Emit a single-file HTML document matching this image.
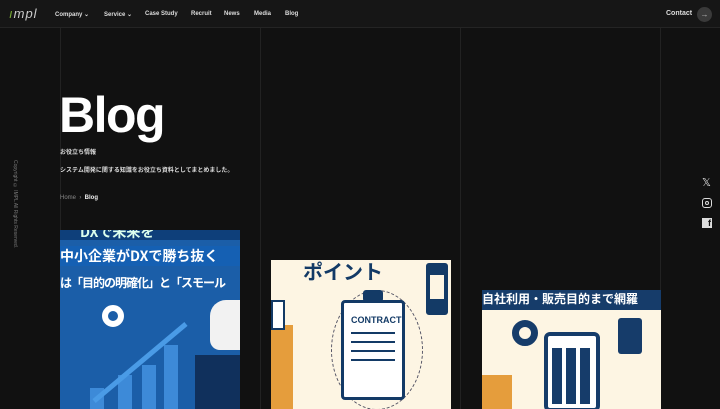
<!DOCTYPE html>
<html><head><meta charset="utf-8"><style>
*{margin:0;padding:0;box-sizing:border-box}
body{width:720px;height:409px;overflow:hidden;background:#111;font-family:"Liberation Sans","Noto Sans CJK JP",sans-serif;color:#fff;position:relative}
.vl{position:absolute;top:0;bottom:0;width:1px;background:#222}
.hdr{position:absolute;left:0;top:0;width:720px;height:28px;background:#161616;border-bottom:1px solid #242424}
.nav{position:absolute;top:11px;font-size:6px;font-weight:bold;color:#ddd}
.abs{position:absolute}
.card{position:absolute;overflow:hidden}
.jp{font-family:"Noto Sans CJK JP",sans-serif;font-weight:bold}
</style></head><body>
<div class="vl" style="left:60px"></div><div class="vl" style="left:260px"></div><div class="vl" style="left:460px"></div><div class="vl" style="left:660px"></div>
<div class="hdr"></div>
<div class="abs" style="left:9px;top:6px;font-size:13px;font-style:italic;color:#ccc;letter-spacing:1px"><span style="color:#7a3">ı</span>mpl</div>
<div class="nav" style="left:55px">Company ⌄</div>
<div class="nav" style="left:104px">Service ⌄</div>
<div class="nav" style="left:145px">Case Study</div>
<div class="nav" style="left:191px">Recruit</div>
<div class="nav" style="left:224px">News</div>
<div class="nav" style="left:254px">Media</div>
<div class="nav" style="left:285px">Blog</div>
<div class="nav" style="left:666px;font-size:7px;top:10px">Contact</div>
<div class="abs" style="left:697px;top:7px;width:15px;height:15px;border-radius:50%;background:#3a3a3a;color:#bbb;font-size:8px;text-align:center;line-height:15px">→</div>
<div class="abs" style="left:59px;top:86px;font-size:50px;font-weight:bold;letter-spacing:-1.5px">Blog</div>
<div class="abs jp" style="left:60px;top:147px;font-size:6px;color:#ddd">お役立ち情報</div>
<div class="abs jp" style="left:60px;top:165px;font-size:6px;color:#ddd">システム開発に関する知識をお役立ち資料としてまとめました。</div>
<div class="abs" style="left:60px;top:195px;font-size:6px;color:#888">Home &nbsp;›&nbsp; <span style="color:#eee;font-weight:bold">Blog</span></div>
<div class="abs" style="left:12px;top:160px;font-size:5px;color:#777;writing-mode:vertical-rl;white-space:nowrap">Copyright © IMPL All Rights Reserved.</div>
<div class="abs" style="left:702px;top:176px;font-size:11px;color:#ddd">𝕏</div>
<div class="abs" style="left:702px;top:198px;width:10px;height:10px;border:1.5px solid #ddd;border-radius:3px"><div style="width:4px;height:4px;border:1px solid #ddd;border-radius:50%;margin:1.5px"></div></div>
<div class="abs" style="left:702px;top:218px;width:10px;height:10px;background:#ddd;color:#111;font-size:9px;font-weight:bold;text-align:right;line-height:11px;padding-right:1px">f</div>

<div class="card" style="left:60px;top:230px;width:180px;height:179px;background:#1b5ea8">
 <div class="abs" style="left:0;top:0;width:180px;height:10px;background:#0e3f7a"></div>
 <div class="abs jp" style="left:20px;top:-8px;font-size:14px;color:#dfe">DXで未来を</div>
 <div class="abs" style="left:0;top:16px;width:180px;height:20px;background:#1560b3"></div>
 <div class="abs jp" style="left:0;top:16px;font-size:14px;white-space:nowrap">中小企業がDXで勝ち抜く</div>
 <div class="abs jp" style="left:0;top:44px;font-size:12px;white-space:nowrap;letter-spacing:-1px">は「目的の明確化」と「スモール</div>
 <div class="abs" style="left:42px;top:75px;width:22px;height:22px;border:6px solid #fff;border-radius:50%"></div>
 <div class="abs" style="left:30px;top:158px;width:14px;height:21px;background:#3d8ad8"></div>
 <div class="abs" style="left:58px;top:145px;width:14px;height:34px;background:#3d8ad8"></div>
 <div class="abs" style="left:82px;top:135px;width:14px;height:44px;background:#3d8ad8"></div>
 <div class="abs" style="left:104px;top:115px;width:14px;height:64px;background:#3d8ad8"></div>
 <div class="abs" style="left:20px;top:130px;width:120px;height:5px;background:#4a9be6;transform:rotate(-40deg)"></div>
 <div class="abs" style="left:150px;top:70px;width:40px;height:50px;background:#f2f2f2;border-radius:16px 0 0 10px"></div>
 <div class="abs" style="left:135px;top:125px;width:50px;height:60px;background:#10305c"></div>
</div>

<div class="card" style="left:271px;top:260px;width:180px;height:149px;background:#fdf5e3">
 <div class="abs jp" style="left:32px;top:-4px;font-size:20px;color:#133a66">ポイント</div>
 <div class="abs" style="left:155px;top:3px;width:22px;height:52px;border:4px solid #133a66;border-radius:3px;background:#133a66"><div style="background:#fdf5e3;height:24px;margin-top:8px"></div></div>
 <div class="abs" style="left:60px;top:30px;width:92px;height:120px;border:1px dashed #556;border-radius:50%"></div>
 <div class="abs" style="left:70px;top:40px;width:64px;height:100px;border:3px solid #133a66;border-radius:4px;background:#fff"></div>
 <div class="abs" style="left:92px;top:30px;width:20px;height:12px;background:#133a66;border-radius:3px"></div>
 <div class="abs" style="left:80px;top:55px;font-size:9px;font-weight:bold;color:#133a66">CONTRACT</div>
 <div class="abs" style="left:80px;top:72px;width:44px;height:30px;background:repeating-linear-gradient(#133a66 0 2px,transparent 2px 9px)"></div>
 <div class="abs" style="left:0;top:65px;width:22px;height:90px;background:#e59d3c"></div>
 <div class="abs" style="left:0;top:40px;width:14px;height:30px;background:#fff;border:2px solid #133a66"></div>
</div>

<div class="card" style="left:482px;top:290px;width:179px;height:119px;background:#fdf5e3">
 <div class="abs" style="left:0;top:0;width:179px;height:20px;background:#163c6a"></div>
 <div class="abs jp" style="left:0;top:0px;font-size:12px;white-space:nowrap">自社利用・販売目的まで網羅</div>
 <div class="abs" style="left:30px;top:30px;width:26px;height:26px;border:7px solid #163c6a;border-radius:50%"></div>
 <div class="abs" style="left:62px;top:42px;width:56px;height:80px;border:4px solid #163c6a;border-radius:6px;background:#fff"></div>
 <div class="abs" style="left:70px;top:58px;width:40px;height:56px;background:repeating-linear-gradient(90deg,#163c6a 0 10px,transparent 10px 14px)"></div>
 <div class="abs" style="left:136px;top:28px;width:24px;height:36px;background:#163c6a;border-radius:3px"></div>
 <div class="abs" style="left:0;top:85px;width:30px;height:40px;background:#e59d3c"></div>
</div>
</body></html>
